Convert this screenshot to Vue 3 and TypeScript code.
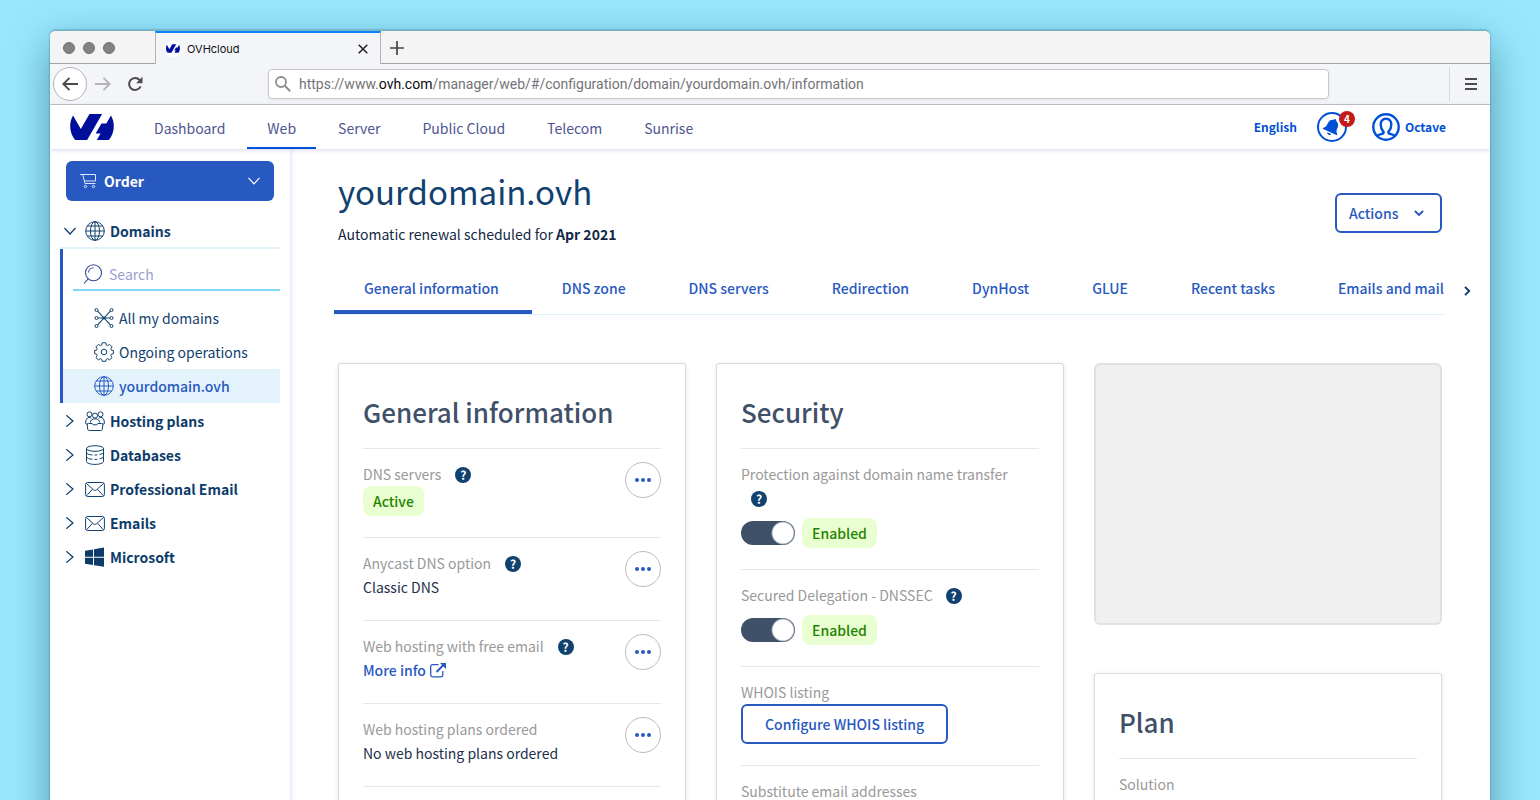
<script setup lang="ts">
import { ref } from 'vue'

interface InfoRow {
  label: string
  help?: boolean
  kind: 'badge' | 'text' | 'link'
  value: string
}

const navItems: string[] = ['Dashboard', 'Web', 'Server', 'Public Cloud', 'Telecom', 'Sunrise']
const activeNav = ref('Web')

const tabs: string[] = [
  'General information', 'DNS zone', 'DNS servers', 'Redirection',
  'DynHost', 'GLUE', 'Recent tasks', 'Emails and mail',
]
const activeTab = ref('General information')

const domainLinks = [
  { label: 'All my domains', icon: 'network' },
  { label: 'Ongoing operations', icon: 'gear' },
  { label: 'yourdomain.ovh', icon: 'globe' },
]
const activeDomain = ref('yourdomain.ovh')

const sections = [
  { label: 'Hosting plans', icon: 'people' },
  { label: 'Databases', icon: 'database' },
  { label: 'Professional Email', icon: 'mail' },
  { label: 'Emails', icon: 'mail' },
  { label: 'Microsoft', icon: 'windows' },
]

const generalRows: InfoRow[] = [
  { label: 'DNS servers', help: true, kind: 'badge', value: 'Active' },
  { label: 'Anycast DNS option', help: true, kind: 'text', value: 'Classic DNS' },
  { label: 'Web hosting with free email', help: true, kind: 'link', value: 'More info' },
  { label: 'Web hosting plans ordered', kind: 'text', value: 'No web hosting plans ordered' },
]

const toggles = ref([
  { id: 'transfer-lock', label: 'Protection against domain name transfer', on: true },
  { id: 'dnssec', label: 'Secured Delegation - DNSSEC', on: true },
])

const search = ref('')
const address = 'https://www.ovh.com/manager/web/#/configuration/domain/yourdomain.ovh/information'
const host = 'ovh.com'
const hostStart = address.indexOf(host)
const addressHead = address.slice(0, hostStart)
const addressTail = address.slice(hostStart + host.length)
</script>

<template>
  <div class="desktop">
    <div class="window">
      <div class="titlebar">
        <div class="lights"><i></i><i></i><i></i></div>
        <div class="browser-tab">
          <span class="favicon">
            <svg viewBox="0 4.85 24 14.3" width="14" height="9"><path fill="#000e9c" d="M19.881 10.095l2.563-4.45C23.434 7.389 24 9.404 24 11.555c0 2.88-1.017 5.523-2.71 7.594h-6.62l2.04-3.541h-2.696l3.176-5.513h2.691zm-2.32-5.243L9.333 19.14l.003.009H2.709C1.014 17.077 0 14.435 0 11.555c0-2.152.57-4.17 1.561-5.918L5.855 13.1l4.759-8.247h6.947z" /></svg>
          </span>
          <span class="browser-tab-name">OVHcloud</span>
          <button class="plain" aria-label="Close tab">
            <svg width="10" height="10" viewBox="0 0 10 10"><path d="M.7.7l8.6 8.6M9.3.7L.7 9.3" stroke="#222" stroke-width="1.5" /></svg>
          </button>
        </div>
        <button class="plain new-tab" aria-label="New tab">
          <svg width="14" height="14" viewBox="0 0 14 14"><path d="M7 0v14M0 7h14" stroke="#444" stroke-width="1.7" /></svg>
        </button>
      </div>

      <div class="toolbar">
        <button class="plain back" aria-label="Back">
          <svg width="16" height="14" viewBox="0 0 16 14"><path d="M16 7H1.5M7.5.8L1.3 7l6.2 6.2" fill="none" stroke="#4b4b4f" stroke-width="1.9" /></svg>
        </button>
        <button class="plain forward" aria-label="Forward">
          <svg width="16" height="14" viewBox="0 0 16 14"><path d="M0 7h14.5M8.5.8L14.7 7l-6.2 6.2" fill="none" stroke="#b4b4b7" stroke-width="1.8" /></svg>
        </button>
        <button class="plain reload" aria-label="Reload">
          <svg width="16" height="16" viewBox="0 0 16 16"><path d="M13.6 10.3A6 6 0 1 1 12.6 4" fill="none" stroke="#4b4b4f" stroke-width="2" /><path d="M15.5.8v6.4H9.1z" fill="#4b4b4f" /></svg>
        </button>
        <div class="address">
          <svg width="16" height="16" viewBox="0 0 16 16"><circle cx="6" cy="6" r="5" fill="none" stroke="#8e8e90" stroke-width="1.8" /><path d="M9.8 9.8l5.4 5.4" stroke="#8e8e90" stroke-width="2" /></svg>
          <span class="url">{{ addressHead }}<b>{{ host }}</b>{{ addressTail }}</span>
        </div>
        <button class="plain burger" aria-label="Menu">
          <svg width="12" height="12" viewBox="0 0 12 12"><path d="M0 1h12M0 6h12M0 11h12" stroke="#4b4b4f" stroke-width="2" /></svg>
        </button>
      </div>

      <header class="header">
        <a href="#" class="logo" aria-label="OVHcloud">
          <svg viewBox="0 4.85 24 14.3" width="44" height="26"><path fill="#000e9c" d="M19.881 10.095l2.563-4.45C23.434 7.389 24 9.404 24 11.555c0 2.88-1.017 5.523-2.71 7.594h-6.62l2.04-3.541h-2.696l3.176-5.513h2.691zm-2.32-5.243L9.333 19.14l.003.009H2.709C1.014 17.077 0 14.435 0 11.555c0-2.152.57-4.17 1.561-5.918L5.855 13.1l4.759-8.247h6.947z" /></svg>
        </a>
        <nav class="nav">
          <a v-for="item in navItems" :key="item" href="#" :class="{ active: item === activeNav }" @click.prevent="activeNav = item">{{ item }}</a>
        </nav>
        <div class="account">
          <button class="plain language">English</button>
          <button class="plain bell" aria-label="Notifications">
            <svg width="30" height="30" viewBox="0 0 30 30">
              <circle cx="15" cy="15" r="14" fill="#fff" stroke="#0050d7" stroke-width="2" />
              <g transform="rotate(24 15 15)" fill="#0050d7">
                <path d="M15 6.5c.9 0 1.3.6 1.3 1.3 2.5.6 4 2.6 4 5.3 0 3.400.5 5 2.500 6.400v1H7.200v-1c2-1.400 2.500-3 2.500-6.400 0-2.700 1.500-4.700 4-5.300 0-.7.4-1.300 1.300-1.300z" />
                <path d="M12.800 21.800h4.400a2.200 1.600 0 0 1-4.400 0z" />
              </g>
            </svg>
            <span class="count">4</span>
          </button>
          <button class="plain user">
            <svg width="28" height="28" viewBox="0 0 28 28" fill="none" stroke="#0050d7">
              <circle cx="14" cy="14" r="12.700" stroke-width="2.400" />
              <path d="M4.800 22.700c1.600-1.200 4-1.500 6.200-2.200.8-.3.800-1.200.3-2-1.500-1.800-2.600-4.200-2.600-6.800 0-3.600 2.100-6 5.300-6s5.300 2.400 5.300 6c0 2.600-1.100 5-2.600 6.800-.5.800-.5 1.700.3 2 2.200.7 4.600 1 6.200 2.200" stroke-width="2.400" />
            </svg>
            <span>Octave</span>
          </button>
        </div>
      </header>

      <div class="body">
        <aside class="sidebar">
          <button class="order">
            <svg width="16" height="16" viewBox="0 0 16 16" fill="none" stroke="#dbe6ff"><path d="M0 1.500h15.500v6.500H4.500M2.700 1.500l2.300 9h10.500" /><circle cx="5.500" cy="13.500" r="1.200" /><circle cx="13.500" cy="13.500" r="1.200" /></svg>
            <span>Order</span>
            <svg width="12" height="8" viewBox="0 0 12 8"><path d="M.5.8L6 6.800l5.500-6" fill="none" stroke="#fff" stroke-width="1.200" /></svg>
          </button>

          <button class="plain section domains">
            <svg class="chev" width="12" height="12" viewBox="0 0 12 12"><path d="M.5 3L6 9l5.500-6" fill="none" stroke="#0d3c6b" stroke-width="1.200" /></svg>
            <svg class="icon" viewBox="0 0 20 20" fill="none" stroke="#10416f"><circle cx="10" cy="10" r="9.300" /><ellipse cx="10" cy="10" rx="4.500" ry="9.300" /><path d="M10 .7v18.600M.7 10h18.600M2.300 5h15.400M2.300 15h15.400" /></svg>
            <span>Domains</span>
          </button>

          <div class="tree">
            <label class="search">
              <svg width="20" height="20" viewBox="0 0 20 20" fill="none" stroke="#3a4a9a" stroke-width="1.100"><circle cx="10.500" cy="8.800" r="8" /><path d="M5.200 14.800L1 19.500M5.500 8.500a5 5 0 0 1 5-4.700" /></svg>
              <input v-model="search" type="text" placeholder="Search" aria-label="Search" />
            </label>
            <a v-for="link in domainLinks" :key="link.label" href="#" class="leaf" :class="{ active: link.label === activeDomain }" @click.prevent="activeDomain = link.label">
              <svg v-if="link.icon === 'network'" class="icon" viewBox="0 0 20 20" fill="none" stroke="currentColor"><path d="M3.700 3.200L10 10l6.300-6.800M3.700 16.800L10 10l6.300 6.800M4.200 10h11.600" stroke-width="1.100" /><circle cx="2.500" cy="2" r="1.500" /><circle cx="17.500" cy="2" r="1.500" /><circle cx="2.500" cy="10" r="1.500" /><circle cx="17.500" cy="10" r="1.500" /><circle cx="2.500" cy="18" r="1.500" /><circle cx="17.500" cy="18" r="1.500" /><circle cx="10" cy="10" r="1" fill="currentColor" /></svg>
              <svg v-else-if="link.icon === 'gear'" class="icon" viewBox="0 0 20 20" fill="none" stroke="currentColor"><circle cx="10" cy="10" r="2.800" /><path d="M8.200.8h3.600l.5 2.200 1.300.6 2-1.200 2.400 2.400-1.200 2 .6 1.300 2 .5v3l-2 .6-.6 1.400 1.200 2-2.400 2.300-2-1.200-1.300.6-.5 2H8.200l-.5-2-1.300-.6-2 1.200L2 15.600l1.200-2-.6-1.400-2-.6v-3l2-.5.600-1.300-1.200-2 2.400-2.400 2 1.200 1.300-.6z" stroke-linejoin="round" /></svg>
              <svg v-else class="icon" viewBox="0 0 20 20" fill="none" stroke="currentColor"><circle cx="10" cy="10" r="9.300" /><ellipse cx="10" cy="10" rx="4.500" ry="9.300" /><path d="M10 .7v18.600M.7 10h18.600M2.300 5h15.400M2.300 15h15.400" /></svg>
              <span>{{ link.label }}</span>
            </a>
          </div>

          <button v-for="section in sections" :key="section.label" class="plain section">
            <svg class="chev" width="12" height="12" viewBox="0 0 12 12"><path d="M2.300.3L9 6l-6.700 5.700" fill="none" stroke="#0d3c6b" stroke-width="1.200" /></svg>
            <svg v-if="section.icon === 'people'" class="icon" viewBox="0 0 20 20" fill="none" stroke="#10416f"><circle cx="4.500" cy="3.300" r="2.500" /><circle cx="10" cy="4.600" r="2.500" /><circle cx="15.500" cy="3.300" r="2.500" /><path d="M3 13H1.300c-.5 0-.7-.3-.7-.9C.6 9 1.800 6.600 4 6.400c1 0 1.800.3 2.400 1M17 13h1.700c.5 0 .7-.3.700-.9C19.400 9 18.200 6.600 16 6.400c-1 0-1.800.3-2.400 1M5.300 11.500c.2-2.300 2-3.700 4.700-3.700s4.500 1.400 4.700 3.700M3.500 12.500h3.700l1 1.300h3.600l1-1.300h3.700c1 0 1.400.6 1.300 1.500l-.5 4c-.1 1-.6 1.500-1.500 1.500H4.200c-.9 0-1.400-.5-1.500-1.500l-.5-4c-.1-.9.3-1.500 1.300-1.500z" /></svg>
            <svg v-else-if="section.icon === 'database'" class="icon" viewBox="0 0 20 20" fill="none" stroke="#10416f"><ellipse cx="10" cy="3.500" rx="8.500" ry="2.800" /><path d="M1.500 3.500v13c0 1.600 3.800 2.900 8.500 2.900s8.500-1.300 8.500-2.900v-13M1.500 7.700c.6 1.300 3 2.100 6 2.300M9.500 10.100c1 0 1.900-.1 2.800-.2M14.500 9.500c2-.3 3.500-1 4-1.800M1.500 12c.6 1.300 3 2.100 6 2.300M9.500 14.400c1 0 1.900-.1 2.800-.2M14.500 13.800c2-.3 3.500-1 4-1.800" /></svg>
            <svg v-else-if="section.icon === 'mail'" class="icon" viewBox="0 0 20 20" fill="none" stroke="#10416f"><rect x=".6" y="3.500" width="18.800" height="14" rx="2" /><path d="M1.500 4.500l7 6.300c1 .8 2 .8 3 0l7-6.300M1.500 16.800l6-6.500M18.500 16.800l-6-6.500" /></svg>
            <svg v-else class="icon" viewBox="0 0 20 20" fill="#0d3c6b"><path d="M0 3.700l8-1.300v7.300H0zM9 2.200L19 .5v9.200H9zM0 10.700h8V18l-8-1.300zM9 10.700h10V19.800L9 18.200z" /></svg>
            <span>{{ section.label }}</span>
          </button>
        </aside>

        <main class="main">
          <div class="heading">
            <div>
              <h1>yourdomain.ovh</h1>
              <p>Automatic renewal scheduled for <strong>Apr 2021</strong></p>
            </div>
            <button class="outline actions">
              <span>Actions</span>
              <svg width="10" height="7" viewBox="0 0 10 7"><path d="M.9 1L5 4.900 9.100 1" fill="none" stroke="#2859c0" stroke-width="2" /></svg>
            </button>
          </div>

          <div class="tabbar">
            <nav class="tabs">
              <a v-for="tab in tabs" :key="tab" href="#" :class="{ active: tab === activeTab }" @click.prevent="activeTab = tab">{{ tab }}</a>
            </nav>
            <button class="plain more" aria-label="More tabs">
              <svg width="7" height="10" viewBox="0 0 7 10"><path d="M1 .8L5.200 5 1 9.200" fill="none" stroke="#0d3c6b" stroke-width="1.900" /></svg>
            </button>
          </div>

          <div class="cards">
            <section class="card">
              <h2>General information</h2>
              <div v-for="row in generalRows" :key="row.label" class="row">
                <div>
                  <div class="label">{{ row.label }}<button v-if="row.help" class="plain help" aria-label="Help">?</button></div>
                  <span v-if="row.kind === 'badge'" class="badge">{{ row.value }}</span>
                  <a v-else-if="row.kind === 'link'" href="#" class="link">{{ row.value }}
                    <svg width="16" height="15" viewBox="0 0 16 15" fill="none" stroke="#2859c0"><path d="M8.500 1.700H2.500a1.800 1.800 0 0 0-1.800 1.800v8.500a1.800 1.800 0 0 0 1.800 1.800h8.500a1.800 1.800 0 0 0 1.800-1.800V8" stroke-width="1.300" /><path d="M6.500 9l7-7" stroke-width="2" /><path d="M10 0h6v6z" fill="#2859c0" stroke="none" /></svg>
                  </a>
                  <div v-else class="value">{{ row.value }}</div>
                </div>
                <button class="plain dots" aria-label="Options"><i></i><i></i><i></i></button>
              </div>
              <hr />
            </section>

            <section class="card">
              <h2>Security</h2>
              <div v-for="item in toggles" :key="item.id" class="row">
                <div>
                  <div class="label spaced"><label :for="item.id">{{ item.label }}</label> <button class="plain help" aria-label="Help">?</button></div>
                  <div class="switch-line">
                    <input :id="item.id" v-model="item.on" type="checkbox" class="switch" />
                    <span class="badge">{{ item.on ? 'Enabled' : 'Disabled' }}</span>
                  </div>
                </div>
              </div>
              <div class="row">
                <div>
                  <div class="label">WHOIS listing</div>
                  <button class="outline whois">Configure WHOIS listing</button>
                </div>
              </div>
              <div class="row">
                <div class="label">Substitute email addresses</div>
              </div>
            </section>

            <div class="stack">
              <div class="placeholder"></div>
              <section class="card">
                <h2>Plan</h2>
                <div class="row">
                  <div class="label">Solution</div>
                </div>
              </section>
            </div>
          </div>
        </main>
      </div>
    </div>
  </div>
</template>

<style>
body {
  margin: 0;
}
</style>

<style scoped>
* {
  box-sizing: border-box;
}

.desktop {
  height: 100vh;
  padding: 30px 50px 0;
  overflow: hidden;
  background: #97e8ff;
  font: 14px/24px "Noto Sans CJK SC", "Noto Sans", sans-serif;
  color: #122844;
}

a {
  text-decoration: none;
}

button,
input {
  font: inherit;
}

svg {
  display: block;
  flex: none;
}

.plain {
  padding: 0;
  border: 0;
  background: none;
  color: inherit;
  cursor: pointer;
}

.window {
  min-height: 100vh;
  display: flex;
  flex-direction: column;
  overflow: hidden;
  border-top: 1px solid #74b0c2;
  border-radius: 6px 6px 0 0;
  background: #fff;
  box-shadow: 0 14px 40px rgba(20, 70, 90, 0.5), 0 0 2px rgba(20, 70, 90, 0.6);
}

.titlebar {
  display: flex;
  height: 33px;
  background: linear-gradient(#a2a2a5, #a2a2a5) bottom / 100% 1px no-repeat #f4f4f4;
}

.lights {
  display: flex;
  align-items: center;
  gap: 8px;
  width: 105px;
  padding-left: 13px;
}

.lights i {
  width: 12px;
  height: 12px;
  border: 1px solid #707074;
  border-radius: 50%;
  background: #828286;
}

.browser-tab {
  display: flex;
  align-items: center;
  width: 226px;
  padding: 0 12px 0 9px;
  border: 1px solid #b4b4b6;
  border-width: 2px 1px 0;
  border-top-color: #0a84ff;
  background: #f4f5f8;
  font: 11px/16px Inter, "Liberation Sans", sans-serif;
  color: #111;
}

.favicon {
  display: flex;
  align-items: center;
  justify-content: center;
  width: 16px;
  height: 16px;
  border-radius: 50%;
  background: #fff;
}

.browser-tab-name {
  flex: 1;
  padding-left: 6px;
}

.new-tab {
  padding-left: 9px;
}

.toolbar {
  display: flex;
  align-items: center;
  height: 41px;
  padding-left: 3px;
  border-bottom: 1px solid #c2c2c5;
  background: #f4f5f8;
}

.back {
  display: flex;
  align-items: center;
  justify-content: center;
  width: 34px;
  height: 34px;
  border: 1px solid #b4b4b6;
  border-radius: 50%;
  background: #fff;
}

.forward {
  margin-left: 8px;
}

.reload {
  margin-left: 16px;
}

.address {
  display: flex;
  flex: 1;
  align-items: center;
  gap: 8px;
  height: 30px;
  margin: 0 120px 0 125px;
  padding-left: 6px;
  border: 1px solid #c8c8ca;
  border-radius: 4px;
  background: #fff;
  font: 14px/20px Roboto, "Liberation Sans", sans-serif;
  color: #737377;
  box-shadow: 0 1px 3px rgba(0, 0, 0, 0.08);
}

.address b {
  font-weight: 400;
  color: #0c0c0d;
}

.burger {
  display: flex;
  align-items: center;
  height: 34px;
  padding: 0 13px 0 15px;
  border-left: 1px solid #d8d8da;
}

.header {
  display: flex;
  z-index: 1;
  height: 44px;
  padding: 0 44px 0 20px;
  background: #fff;
  box-shadow: 0 1px 4px rgba(80, 80, 200, 0.25);
}

.logo {
  align-self: center;
}

.nav {
  display: flex;
  flex: 1;
  gap: 2px;
  padding-left: 20px;
}

.nav a {
  padding: 0 20px;
  line-height: 46px;
  color: #4d5592;
}

.nav a.active {
  box-shadow: inset 0 -2px #0050d7;
  height: 44px;
}

.account {
  display: flex;
  align-items: center;
  font-size: 12px;
  font-weight: 700;
  color: #0050d7;
}

.bell {
  position: relative;
  margin: 0 25px 0 20px;
}

.count {
  position: absolute;
  top: -1px;
  right: -8px;
  width: 16px;
  height: 16px;
  border-radius: 50%;
  background: #c11b1b;
  color: #fff;
  font-size: 10px;
  line-height: 16px;
}

.user {
  display: flex;
  align-items: center;
  gap: 5px;
}

.body {
  display: flex;
  flex: 1;
}

.sidebar {
  flex: none;
  width: 240px;
  padding: 12px 10px 0;
  box-shadow: 1px 0 4px rgba(80, 80, 200, 0.2);
  color: #0d3c6b;
}

.order {
  display: flex;
  align-items: center;
  gap: 8px;
  width: 208px;
  height: 40px;
  margin: 0 6px 12px;
  padding: 0 14px;
  border: 0;
  border-radius: 6px;
  background: #2859c0;
  color: #fff;
  font-weight: 700;
}

.order span {
  flex: 1;
  text-align: left;
}

.section {
  display: flex;
  align-items: center;
  width: 100%;
  height: 34px;
  padding: 2px 0 0 4px;
  font-weight: 700;
}

.chev {
  margin-right: 9px;
}

.icon {
  width: 20px;
  height: 20px;
  margin-right: 5px;
}

.domains {
  height: 36px;
  border-bottom: 2px solid #e4f3fb;
}

.tree {
  border-left: 3px solid #2859c0;
}

.search {
  display: flex;
  align-items: center;
  height: 42px;
  margin: 0 0 10px 10px;
  padding: 10px 0 0 10px;
  gap: 6px;
  border-bottom: 2px solid #85d5f7;
}

.search input {
  width: 100%;
  min-width: 0;
  padding: 0;
  border: 0;
  outline: 0;
  background: none;
}

.search input::placeholder {
  color: #9a9fd0;
  opacity: 1;
}

.leaf {
  display: flex;
  align-items: center;
  height: 34px;
  padding-left: 31px;
  color: #10416f;
}

.leaf.active {
  background: #e4f3fb;
  color: #2859c0;
  font-weight: 500;
}

.main {
  flex: 1;
  min-width: 0;
  padding: 18px 48px 0;
}

.heading {
  display: flex;
  justify-content: space-between;
}

h1 {
  margin: 0;
  font-size: 33px;
  line-height: 48px;
  font-weight: 400;
  color: #10416f;
}

.heading p {
  margin: 7px 0 0;
}

.outline {
  border: 2px solid #2859c0;
  border-radius: 6px;
  height: 40px;
  background: #fff;
  color: #2859c0;
  font-weight: 500;
}

.actions {
  display: flex;
  align-items: center;
  justify-content: space-between;
  width: 107px;
  margin-top: 26px;
  padding: 0 16px 0 12px;
}

.tabbar {
  display: flex;
  margin: 19px -32px 48px -4px;
}

.tabs {
  display: flex;
  flex: 1;
  overflow: hidden;
  border-bottom: 1px solid #e0f2fc;
}

.tabs a {
  flex: none;
  height: 49px;
  padding: 0 33px 0 30px;
  line-height: 46px;
  font-weight: 500;
  color: #2859c0;
}

.tabs a.active {
  box-shadow: inset 0 -4px #2859c0;
}

.more {
  width: 28px;
  padding: 2px 0 0 18px;
}

.cards {
  display: grid;
  grid-template-columns: repeat(3, 1fr);
  align-items: start;
  gap: 30px;
}

.card {
  padding: 25px 24px 24px;
  border: 1px solid #d9d9dc;
  border-radius: 3px;
  background: #fff;
  box-shadow: 0 1px 4px rgba(0, 0, 0, 0.1);
}

h2 {
  margin: 0 0 13px;
  font-size: 26px;
  line-height: 46px;
  font-weight: 500;
  color: #3f5169;
}

hr {
  margin: 0;
  border: 0;
  border-top: 1px solid #e6e6e6;
}

.row {
  display: flex;
  justify-content: space-between;
  align-items: flex-start;
  padding: 13px 0 21px;
  border-top: 1px solid #e6e6e6;
}

.label {
  color: #999;
}

.help {
  width: 16px;
  height: 16px;
  margin-left: 14px;
  border-radius: 50%;
  background: #10416f;
  color: #fff;
  font-size: 12px;
  font-weight: 700;
  line-height: 16px;
}

.spaced .help {
  margin: 0 10px;
}

.value {
  color: #1c2f4a;
}

.badge {
  display: block;
  width: max-content;
  padding: 0 10px;
  border-radius: 8px;
  background: #eaffd1;
  color: #1f8400;
  font-weight: 500;
  line-height: 30px;
}

.link {
  display: flex;
  align-items: center;
  gap: 4px;
  color: #2859c0;
  font-weight: 500;
}

.dots {
  display: flex;
  flex: none;
  align-items: center;
  justify-content: center;
  gap: 2px;
  width: 36px;
  height: 36px;
  border: 1px solid #bbb;
  border-radius: 50%;
}

.dots i {
  width: 4px;
  height: 4px;
  border-radius: 50%;
  background: #2859c0;
}

.switch-line {
  display: flex;
  align-items: center;
  gap: 7px;
  margin-top: 8px;
}

.switch {
  appearance: none;
  width: 54px;
  height: 24px;
  margin: 0;
  border-radius: 12px;
  background: radial-gradient(circle at 12px 12px, #fff 10px, rgba(255, 255, 255, 0) 12px) #9aa5b3;
}

.switch:checked {
  background: radial-gradient(circle at 42px 12px, #fff 10px, rgba(255, 255, 255, 0) 12px) #3f5169;
}

.whois {
  display: block;
  padding: 0 22px;
}

.stack {
  display: grid;
  gap: 48px;
}

.placeholder {
  height: 262px;
  border: 2px solid #e1e1dd;
  border-radius: 6px;
  background: #f0f0f0;
}
</style>
